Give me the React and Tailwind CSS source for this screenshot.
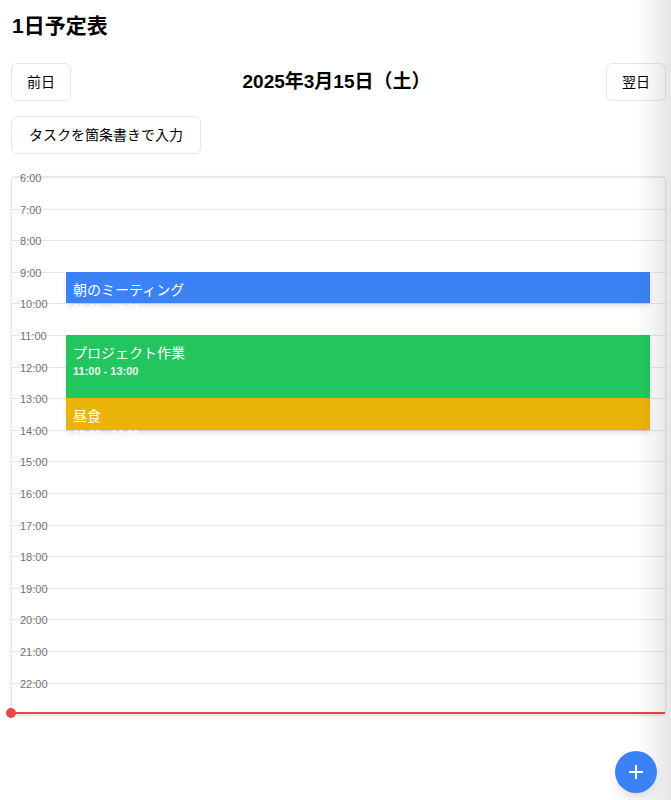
import React from "react";

const HOUR_H = 31.6;
const START = 6;

const hours = Array.from({ length: 17 }, (_, i) => START + i);

const events = [
  { title: "朝のミーティング", start: 9, end: 10, time: "09:00 - 10:00", color: "bg-[#3b82f6]" },
  { title: "プロジェクト作業", start: 11, end: 13, time: "11:00 - 13:00", color: "bg-[#22c55e]" },
  { title: "昼食", start: 13, end: 14, time: "13:00 - 14:00", color: "bg-[#eab308]" },
];

// current time marker (22:57)
const NOW = 22 + 57 / 60;

const font = { fontFamily: '"Liberation Sans", "Noto Sans CJK JP", sans-serif' };

export default function App() {
  return (
    <div className="relative min-h-[800px] bg-white text-black overflow-hidden" style={font}>
      <div className="pl-[11px] pr-[5px] pt-3">
        {/* header */}
        <h1 className="text-[21px] font-bold leading-7 pl-px">1日予定表</h1>

        <div className="mt-[23px] flex items-center justify-between">
          <button className="h-[38px] px-[15px] rounded-md border border-[#e5e7eb] bg-white text-sm">前日</button>
          <h2 className="text-[19px] font-bold -ml-1">2025年3月15日（土）</h2>
          <button className="h-[38px] px-[15px] rounded-md border border-[#e5e7eb] bg-white text-sm">翌日</button>
        </div>

        <button className="mt-[15px] h-[38px] px-[17px] rounded-md border border-[#e5e7eb] bg-white text-sm">
          タスクを箇条書きで入力
        </button>

        {/* timeline */}
        <div className="mt-[22px] rounded-md border border-[#e5e7eb] shadow-sm">
          <div className="relative h-[537px]">
            <div className="flex flex-col">
              {hours.map((h) => (
                <div key={h} className="h-[31.6px] border-t border-[#e5e7eb] pl-2">
                  <span className="block -mt-[8px] text-[11px] leading-4 text-[#6b7280]">{h}:00</span>
                </div>
              ))}
            </div>

            {events.map((ev) => (
              <div
                key={ev.title}
                className={`absolute left-[54px] right-[15px] ${ev.color} shadow-md px-[7px] py-2 text-white`}
                style={{ top: (ev.start - START) * HOUR_H, height: (ev.end - ev.start) * HOUR_H }}
              >
                <div className="text-sm leading-5">{ev.title}</div>
                <div className="text-[11px] leading-4 font-bold opacity-90">{ev.time}</div>
              </div>
            ))}

            {/* current time */}
            <div className="absolute -left-px right-0 h-[2px] bg-[#ef4444]" style={{ top: (NOW - START) * HOUR_H - 1 }}>
              <div className="absolute -left-[5px] -top-[4px] w-[10px] h-[10px] rounded-full bg-[#ef4444]" />
            </div>
          </div>
        </div>
      </div>

      {/* right edge shade */}
      <div className="pointer-events-none absolute top-0 right-0 h-full w-[34px] bg-gradient-to-r from-transparent to-black/10" />

      {/* floating add button */}
      <button className="absolute right-[14px] bottom-[7px] w-[42px] h-[42px] rounded-full bg-[#3b82f6] shadow-lg flex items-center justify-center">
        <svg width="18" height="18" viewBox="0 0 18 18" fill="none" stroke="white" strokeWidth="2">
          <path d="M9 2v14M2 9h14" />
        </svg>
      </button>
    </div>
  );
}
